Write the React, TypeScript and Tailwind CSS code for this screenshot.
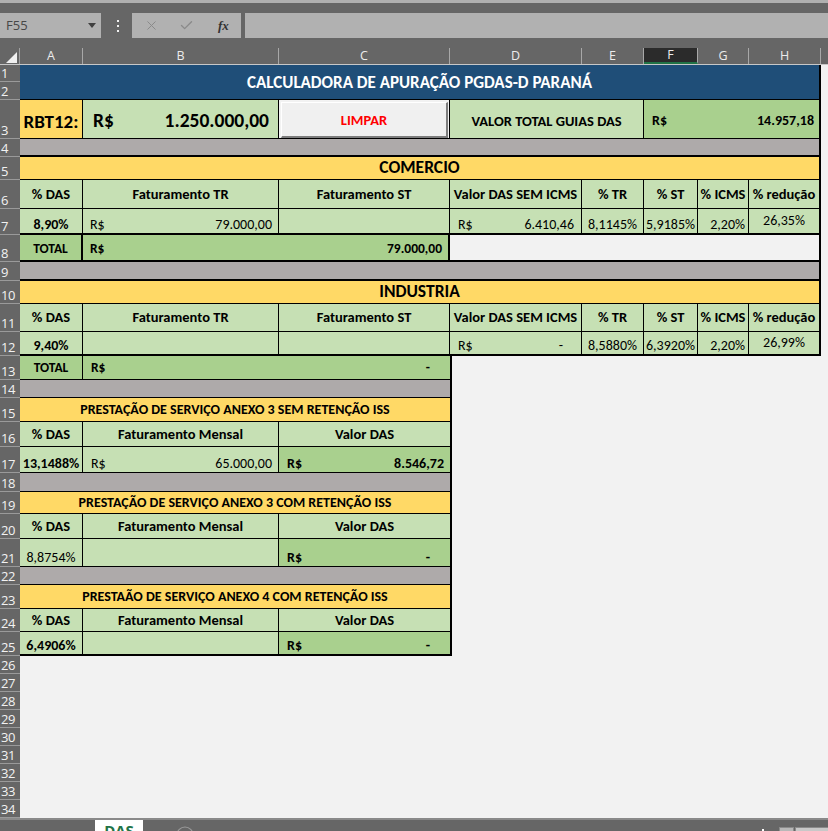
import { X, Check } from "lucide-react";

const rowHeights = [
  "h-[17px]", "h-[18px]", "h-[39px]", "h-[18px]", "h-[23px]", "h-[29px]", "h-[26px]", "h-[27px]", "h-[19px]",
  "h-[23px]", "h-[28px]", "h-[24px]", "h-[24px]", "h-[18px]", "h-[24px]", "h-[25px]", "h-[26px]", "h-[19px]",
  "h-[22px]", "h-[25px]", "h-[28px]", "h-[18px]", "h-[24px]", "h-[23px]", "h-[24px]",
  "h-[18px]", "h-[18px]", "h-[18px]", "h-[18px]", "h-[18px]", "h-[18px]", "h-[18px]", "h-[18px]", "h-[18px]",
];

const columns = [
  { l: "A", w: "w-[63px]" },
  { l: "B", w: "w-[196px]" },
  { l: "C", w: "w-[171px]" },
  { l: "D", w: "w-[132px]" },
  { l: "E", w: "w-[62px]" },
  { l: "F", w: "w-[54px]", active: true },
  { l: "G", w: "w-[51px]" },
  { l: "H", w: "w-[72px]" },
];

function Money({ value, bold = false }: { value: string; bold?: boolean }) {
  return (
    <>
      <span className={bold ? "font-bold" : ""}>R$</span>
      <span className={bold ? "font-bold" : ""}>{value}</span>
    </>
  );
}

function TaxHeader({ h }: { h: string }) {
  return (
    <div className={`flex ${h} border-b border-black bg-[#c6e0b4] text-[14.5px] font-bold leading-none`}>
      <div className="w-[63px] border-r border-black flex items-center justify-center">% DAS</div>
      <div className="w-[196px] border-r border-black flex items-center justify-center">Faturamento TR</div>
      <div className="w-[171px] border-r border-black flex items-center justify-center">Faturamento ST</div>
      <div className="w-[132px] border-r border-black flex items-center justify-center">Valor DAS SEM ICMS</div>
      <div className="w-[62px] border-r border-black flex items-center justify-center">% TR</div>
      <div className="w-[54px] border-r border-black flex items-center justify-center">% ST</div>
      <div className="w-[51px] border-r border-black flex items-center justify-center whitespace-nowrap">% ICMS</div>
      <div className="w-[70px] flex items-center justify-center whitespace-nowrap">% redução</div>
    </div>
  );
}

function ServiceHeader({ h }: { h: string }) {
  return (
    <div className={`flex ${h} border-b border-black bg-[#c6e0b4] text-[14.5px] font-bold leading-none`}>
      <div className="w-[63px] border-r border-black flex items-center justify-center">% DAS</div>
      <div className="w-[196px] border-r border-black flex items-center justify-center">Faturamento Mensal</div>
      <div className="w-[171px] flex items-center justify-center">Valor DAS</div>
    </div>
  );
}

function SectionTitle({ h, children }: { h: string; children: React.ReactNode }) {
  return (
    <div className={`${h} border-b border-black bg-[#ffd966] flex items-center justify-center text-[14px] font-bold leading-none whitespace-nowrap`}>
      {children}
    </div>
  );
}

export default function App() {
  return (
    <div className="w-[828px] h-[831px] overflow-hidden bg-[#f2f2f2] font-[Carlito,Lato,sans-serif] text-black">
      {/* formula bar */}
      <div className="h-[48px] bg-[#666666] border-t-[3px] border-[#b0b0b0] pt-[10px] flex items-start font-['Open_Sans',sans-serif]">
        <div className="relative w-[101px] h-[25px] bg-[#b1b1b1] flex items-center pl-[6px] text-[13px] text-[#474747]">
          F55
          <svg className="absolute left-[88px] top-[10px]" width="8" height="5" viewBox="0 0 8 5">
            <path d="M0 0h8L4 5z" fill="#404040" />
          </svg>
        </div>
        <svg className="ml-[15px] mt-[7px]" width="4" height="12" viewBox="0 0 4 12">
          <rect x="1" y="0" width="2" height="2" fill="#f0f0f0" />
          <rect x="1" y="5" width="2" height="2" fill="#f0f0f0" />
          <rect x="1" y="10" width="2" height="2" fill="#f0f0f0" />
        </svg>
        <div className="ml-[12px] w-[109px] h-[25px] bg-[#b1b1b1] flex items-center">
          <X className="ml-[12px] text-[#8a8a8a]" size={15} strokeWidth={1.6} />
          <Check className="ml-[20px] text-[#8a8a8a]" size={15} strokeWidth={2.2} />
          <span className="ml-[24px] font-['Liberation_Serif',serif] italic font-bold text-[13px] text-[#333333]">fx</span>
        </div>
        <div className="ml-[4px] flex-1 h-[25px] bg-[#b1b1b1]" />
      </div>

      {/* column headers */}
      <div className="flex h-[17px] bg-[#666666] border-b border-[#c8c8c8] text-[12.5px] text-[#ececec] font-['Open_Sans',sans-serif] leading-none">
        <div className="w-[20px] border-r border-[#a0a0a0] relative">
          <svg className="absolute left-[6px] top-[4px]" width="11" height="11" viewBox="0 0 11 11">
            <path d="M11 0v11H0z" fill="#f0f0f0" />
          </svg>
        </div>
        {columns.map((c) => (
          <div
            key={c.l}
            className={`${c.w} flex items-center justify-center border-r border-[#a8a8a8] ${
              c.active ? "bg-[#2b2b2b] border-b-2 border-b-[#217346]" : ""
            }`}
          >
            {c.l}
          </div>
        ))}
      </div>

      <div className="flex">
        {/* row headers */}
        <div className="w-[20px] bg-[#666666] font-['Open_Sans',sans-serif] text-[13px] text-[#f2f2f2] leading-none tracking-[-0.5px]">
          {rowHeights.map((h, i) => (
            <div key={i} className={`${h} border-b border-[#9a9a9a] flex items-end pl-[1px] pb-[1px]`}>
              {i + 1}
            </div>
          ))}
        </div>

        <div className="flex-1">
          {/* rows 1-12 */}
          <div className="w-[801px] border-r-2 border-black">
            <div className="h-[35px] bg-[#1f4e78] border-b border-black flex items-center justify-center text-white font-bold text-[17px] leading-none">
              CALCULADORA DE APURAÇÃO PGDAS-D PARANÁ
            </div>
            <div className="flex h-[39px] border-b border-black leading-none">
              <div className="w-[63px] bg-[#ffd966] border-r border-black flex items-center justify-center pt-[4px] font-bold text-[19px]">
                RBT12:
              </div>
              <div className="w-[196px] bg-[#c6e0b4] border-r border-black flex items-center justify-between pt-[4px] pl-[10px] pr-[9px] font-bold text-[19.5px]">
                <span>R$</span>
                <span>1.250.000,00</span>
              </div>
              <div className="w-[171px] border-r border-black pt-[2px] pl-[2px] pr-[1px]">
                <div className="h-full bg-[#f0f0f0] border-t border-l border-white border-r-2 border-b-2 border-r-[#7d7d7d] border-b-[#7d7d7d] flex items-center justify-center pt-[2px] font-bold text-[14.5px] text-[#ff0000]">
                  LIMPAR
                </div>
              </div>
              <div className="w-[194px] bg-[#c6e0b4] border-r border-black flex items-center justify-center pt-[4px] font-bold text-[14.5px]">
                VALOR TOTAL GUIAS DAS
              </div>
              <div className="w-[175px] bg-[#a9d08e] flex items-center justify-between pt-[3px] pl-[8px] pr-[5px] font-bold text-[14px]">
                <span>R$</span>
                <span>14.957,18</span>
              </div>
            </div>
            <div className="h-[18px] bg-[#aeaaaa] border-b-2 border-black" />

            {/* COMERCIO */}
            <div className="h-[23px] bg-[#ffd966] border-b border-black flex items-center justify-center font-bold text-[17.5px] leading-none">
              COMERCIO
            </div>
            <TaxHeader h="h-[29px]" />
            <div className="flex h-[26px] border-b-2 border-black bg-[#c6e0b4] text-[14px] leading-none">
              <div className="w-[63px] border-r border-black flex items-end justify-center pb-[1px] font-bold">8,90%</div>
              <div className="w-[196px] border-r border-black flex items-end justify-between pb-[1px] pl-[7px] pr-[6px]">
                <Money value="79.000,00" />
              </div>
              <div className="w-[171px] border-r border-black" />
              <div className="w-[132px] border-r border-black flex items-end justify-between pb-[1px] pl-[8px] pr-[7px]">
                <Money value="6.410,46" />
              </div>
              <div className="w-[62px] border-r border-black flex items-end justify-end pb-[1px] pr-[6px]">8,1145%</div>
              <div className="w-[54px] border-r border-black flex items-end justify-end pb-[1px] pr-[2px]">5,9185%</div>
              <div className="w-[51px] border-r border-black flex items-end justify-end pb-[1px] pr-[3px]">2,20%</div>
              <div className="w-[70px] flex items-center justify-center">26,35%</div>
            </div>
            <div className="flex h-[27px] border-b-2 border-black text-[13.5px] font-bold leading-none">
              <div className="w-[63px] bg-[#a9d08e] border-r-2 border-black flex items-center justify-center pt-[3px]">TOTAL</div>
              <div className="w-[367px] bg-[#a9d08e] border-r-2 border-black flex items-center justify-between pt-[3px] pl-[7px] pr-[6px]">
                <Money value="79.000,00" bold />
              </div>
              <div className="flex-1 bg-[#f2f2f2]" />
            </div>
            <div className="h-[19px] bg-[#aeaaaa] border-b-2 border-black" />

            {/* INDUSTRIA */}
            <div className="h-[23px] bg-[#ffd966] border-b border-black flex items-center justify-center font-bold text-[17.5px] leading-none">
              INDUSTRIA
            </div>
            <TaxHeader h="h-[28px]" />
            <div className="flex h-[24px] border-b-2 border-black bg-[#c6e0b4] text-[14px] leading-none">
              <div className="w-[63px] border-r border-black flex items-end justify-center pb-[1px] font-bold">9,40%</div>
              <div className="w-[196px] border-r border-black" />
              <div className="w-[171px] border-r border-black" />
              <div className="w-[132px] border-r border-black flex items-end justify-between pb-[1px] pl-[8px] pr-[18px]">
                <Money value="-" />
              </div>
              <div className="w-[62px] border-r border-black flex items-end justify-end pb-[1px] pr-[6px]">8,5880%</div>
              <div className="w-[54px] border-r border-black flex items-end justify-end pb-[1px] pr-[2px]">6,3920%</div>
              <div className="w-[51px] border-r border-black flex items-end justify-end pb-[1px] pr-[3px]">2,20%</div>
              <div className="w-[70px] flex items-center justify-center">26,99%</div>
            </div>
          </div>

          {/* rows 13-25 */}
          <div className="w-[432px] border-r-2 border-black">
            <div className="flex h-[24px] border-b border-black bg-[#a9d08e] text-[13.5px] font-bold leading-none">
              <div className="w-[63px] border-r border-black flex items-center justify-center pt-[1px]">TOTAL</div>
              <div className="w-[367px] flex items-center justify-between pt-[1px] pl-[8px] pr-[20px]">
                <Money value="-" bold />
              </div>
            </div>
            <div className="h-[18px] bg-[#aeaaaa] border-b border-black" />

            <SectionTitle h="h-[24px]">PRESTAÇÃO DE SERVIÇO ANEXO 3 SEM RETENÇÃO ISS</SectionTitle>
            <ServiceHeader h="h-[25px]" />
            <div className="flex h-[26px] border-b border-black bg-[#c6e0b4] text-[14px] leading-none">
              <div className="w-[63px] border-r border-black flex items-end justify-center pb-[1px] font-bold whitespace-nowrap">13,1488%</div>
              <div className="w-[196px] border-r border-black flex items-end justify-between pb-[1px] pl-[8px] pr-[6px]">
                <Money value="65.000,00" />
              </div>
              <div className="w-[171px] bg-[#a9d08e] flex items-end justify-between pb-[1px] pl-[8px] pr-[6px]">
                <Money value="8.546,72" bold />
              </div>
            </div>
            <div className="h-[19px] bg-[#aeaaaa] border-b border-black" />

            <SectionTitle h="h-[22px]">PRESTAÇÃO DE SERVIÇO ANEXO 3 COM RETENÇÃO ISS</SectionTitle>
            <ServiceHeader h="h-[25px]" />
            <div className="flex h-[28px] border-b border-black bg-[#c6e0b4] text-[14px] leading-none">
              <div className="w-[63px] border-r border-black flex items-end justify-center pb-[1px]">8,8754%</div>
              <div className="w-[196px] border-r border-black" />
              <div className="w-[171px] bg-[#a9d08e] flex items-end justify-between pb-[1px] pl-[8px] pr-[20px]">
                <Money value="-" bold />
              </div>
            </div>
            <div className="h-[18px] bg-[#aeaaaa] border-b border-black" />

            <SectionTitle h="h-[24px]">PRESTAÃO DE SERVIÇO ANEXO 4 COM RETENÇÃO ISS</SectionTitle>
            <ServiceHeader h="h-[23px]" />
            <div className="flex h-[24px] border-b-2 border-black bg-[#c6e0b4] text-[14px] leading-none">
              <div className="w-[63px] border-r border-black flex items-end justify-center pb-[1px] font-bold">6,4906%</div>
              <div className="w-[196px] border-r border-black" />
              <div className="w-[171px] bg-[#a9d08e] flex items-end justify-between pb-[1px] pl-[8px] pr-[20px]">
                <Money value="-" bold />
              </div>
            </div>
          </div>
        </div>
      </div>

      {/* sheet tabs */}
      <div className="relative h-[30px] bg-[#666666] border-t-2 border-[#8a8a8a] flex font-['Open_Sans',sans-serif]">
        <span className="absolute left-[22px] top-[8px] text-[9px] text-[#9a9a9a]">◀</span>
        <span className="absolute left-[48px] top-[8px] text-[9px] text-[#9a9a9a]">▶</span>
        <div className="ml-[95px] w-[48px] h-full bg-white text-center text-[15px] font-bold text-[#217346] pt-[3px] leading-none">
          DAS
        </div>
        <svg className="ml-[33px] mt-[6px]" width="18" height="18" viewBox="0 0 18 18">
          <circle cx="9" cy="9" r="8" fill="none" stroke="#9a9a9a" strokeWidth="1.2" />
        </svg>
        <div className="absolute left-[762px] top-[9px] w-[2px] h-[2px] bg-white" />
        <div className="absolute left-[779px] top-[7px] w-[15px] h-[20px] bg-[#b8b8b8] border border-[#8a8a8a]" />
        <div className="absolute left-[795px] top-[7px] w-[40px] h-[20px] bg-[#c8c8c8] border border-[#8a8a8a]" />
      </div>
    </div>
  );
}
